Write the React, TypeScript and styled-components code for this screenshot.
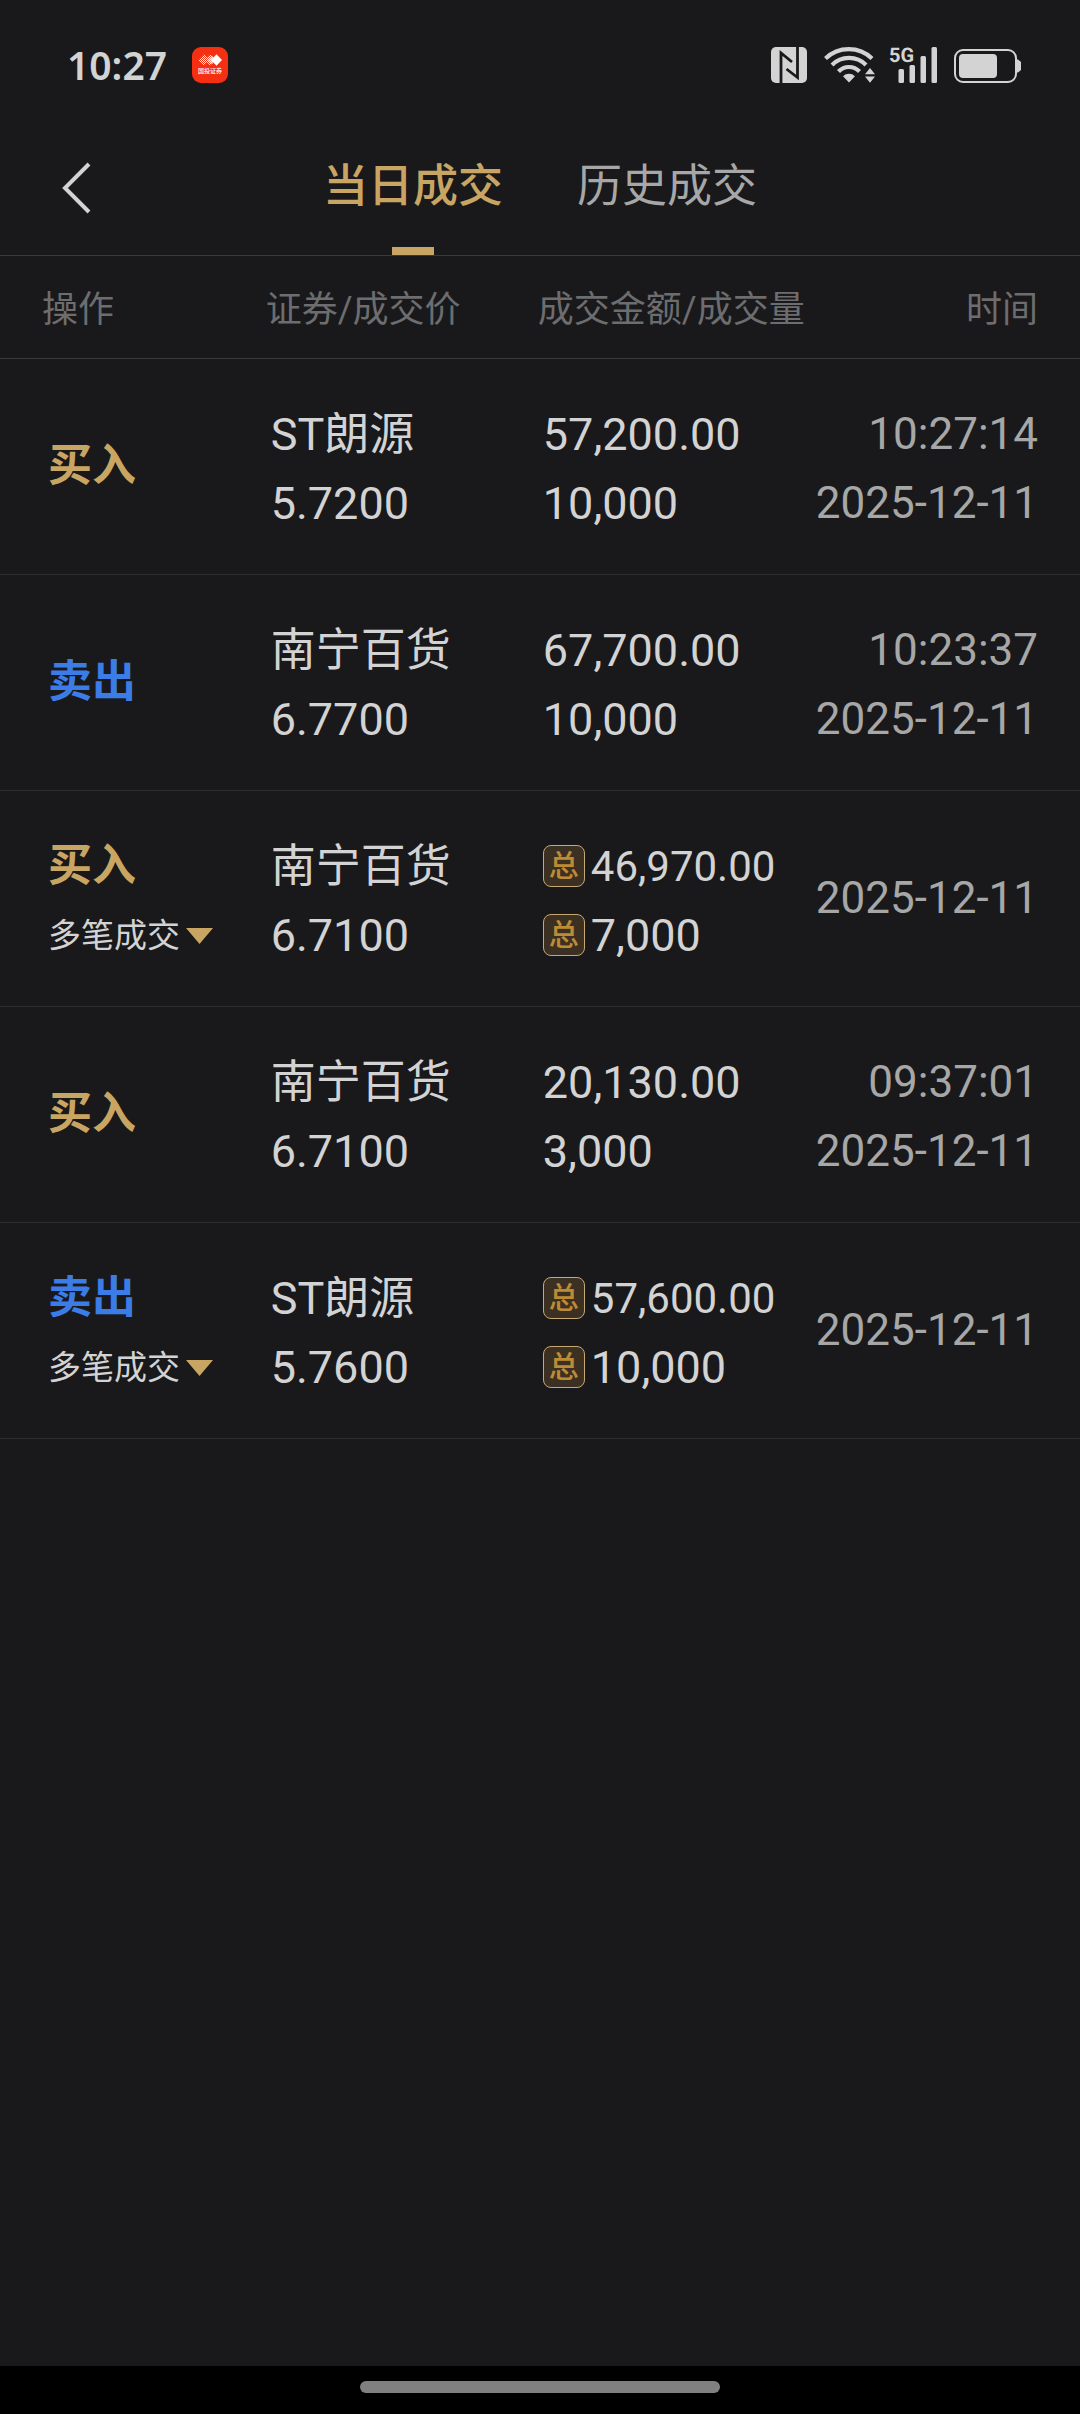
import React from "react";
import styled, { createGlobalStyle } from "styled-components";

const color = {
  page: "#19191b",
  text: "#d3d3d3",
  dim: "#a6a7a6",
  faint: "#6d6d6f",
  gold: "#c9a564",
  blue: "#3b7ce6",
  line: "#2d2d2f",
  headLine: "#39393b",
};

const sans = `Roboto, "Noto Sans CJK SC", sans-serif`;

const GlobalStyle = createGlobalStyle`
  *, *::before, *::after { box-sizing: border-box; }
  body {
    margin: 0;
    background: ${color.page};
    color: ${color.text};
    font-family: ${sans};
  }
  button { margin: 0; padding: 0; border: 0; background: none; color: inherit; font: inherit; cursor: pointer; }
`;

const Screen = styled.div`
  display: flex;
  flex-direction: column;
  min-height: 100vh;
`;

const StatusBar = styled.header`
  display: flex;
  align-items: flex-start;
  justify-content: space-between;
  height: 96px;
  padding: 32px 59px 0 67px;
`;

const StatusGroup = styled.div`
  display: flex;
  align-items: center;
  gap: 25px;
  height: 65px;
`;

const Clock = styled.time`
  font: 600 39px/64px "Noto Sans", "Open Sans", sans-serif;
`;

const TopNav = styled.nav`
  display: grid;
  grid-template-columns: 1fr auto 1fr;
  height: 160px;
  border-bottom: 1px solid ${color.headLine};
`;

const BackButton = styled.button`
  display: flex;
  align-items: center;
  justify-self: start;
  padding: 24px 48px 0 61px;
`;

const Tabs = styled.div`
  display: flex;
  gap: 74px;
`;

const Tab = styled.button<{ $active?: boolean }>`
  display: flex;
  flex-direction: column;
  align-items: center;
  justify-content: flex-end;
  gap: 28px;
  color: ${(p) => (p.$active ? color.gold : color.dim)};
  font-size: 45px;
  font-weight: ${(p) => (p.$active ? 500 : 400)};
  line-height: 64px;

  &::after {
    content: "";
    width: 42px;
    height: 8px;
    background: ${(p) => (p.$active ? color.gold : "transparent")};
  }
`;

const Main = styled.main`
  flex: 1;
`;

const Table = styled.table`
  width: 100%;
  table-layout: fixed;
  border-collapse: separate;
  border-spacing: 0;
`;

const Col = styled.col<{ $width?: string }>`
  width: ${(p) => p.$width ?? "auto"};
`;

const HeadCell = styled.th`
  height: 103px;
  padding: 6px 0 0;
  border-bottom: 1px solid ${color.headLine};
  color: ${color.faint};
  font-size: 36px;
  font-weight: 400;
  line-height: 48px;
  text-align: left;
  white-space: nowrap;

  &:first-child { padding-left: 42px; }
  &:last-child { padding-right: 42px; text-align: right; }
`;

const Cell = styled.td<{ $single?: boolean }>`
  padding: ${(p) => (p.$single ? 36 : 41)}px 0 36px 5px;
  border-bottom: 1px solid ${color.line};
  font-size: 45px;
  line-height: 69px;
  vertical-align: middle;
  white-space: nowrap;

  &:first-child { padding-left: 48px; }
  &:last-child {
    padding-right: 42px;
    padding-left: 0;
    color: ${color.dim};
    font-size: 44px;
    text-align: right;
  }
`;

const Line = styled.div<{ $small?: boolean }>`
  display: flex;
  align-items: center;
  gap: 6px;
  font-size: ${(p) => (p.$small ? 42 : 45)}px;
`;

const Side = styled.div<{ $sell: boolean }>`
  color: ${(p) => (p.$sell ? color.blue : color.gold)};
  font-size: 44px;
  font-weight: 700;
`;

const FillsButton = styled.button`
  display: flex;
  align-items: center;
  gap: 6px;
  font-size: 33px;
  line-height: 69px;
`;

const TotalBadge = styled.span`
  display: flex;
  align-items: center;
  justify-content: center;
  width: 42px;
  height: 42px;
  margin-bottom: 2px;
  border: 1px solid #c6a873;
  border-radius: 8px;
  background: #3c3023;
  color: #bd8b35;
  font-size: 30px;
  font-weight: 500;
  line-height: 40px;
`;

const GestureBar = styled.footer`
  display: flex;
  justify-content: center;
  height: 48px;
  padding-top: 15px;
  background: #000;
`;

const GesturePill = styled.div`
  width: 33.333%;
  height: 12px;
  border-radius: 6px;
  background: #808080;
`;

const AppIcon = () => (
  <svg width="36" height="36" viewBox="0 0 36 36" role="img" aria-label="国投证券">
    <defs>
      <pattern id="dots" width="2" height="2" patternUnits="userSpaceOnUse">
        <rect width="1" height="1" fill="#fff" />
        <rect x="1" y="1" width="1" height="1" fill="#fff" />
      </pattern>
    </defs>
    <rect width="36" height="36" rx="9" fill="#f52f12" />
    <path d="M6.500 13 12 7.500 17.500 13 12 18.500Z" fill="url(#dots)" />
    <path d="M12.500 13 18 7.500 23.500 13 18 18.500Z" fill="url(#dots)" />
    <path d="M15.500 13 20 8.500 24 13 20 17.500Z" fill="#fff" fillOpacity=".55" />
    <path d="M19 13 24.500 7.300 30 13 24.500 18.700Z" fill="#fff" />
    <text x="18" y="26" textAnchor="middle" fontSize="6" fontWeight="500" fill="#fff" fontFamily="Noto Sans CJK SC, sans-serif">
      国投证券
    </text>
  </svg>
);

const StatusIcons = () => (
  <svg width="250" height="48" viewBox="771 40 250 48" fill={color.text} role="img" aria-label="NFC, Wi-Fi, 5G, 电池">
    {/* NFC */}
    <rect x="771" y="46" width="36" height="36" rx="5" />
    <path d="M781 82V52l11 9M797.500 46V76.500l-11-8.500" fill="none" stroke={color.page} strokeWidth="2.800" />
    {/* Wi-Fi */}
    <g fill="none" stroke={color.text} strokeWidth="4.200">
      <path d="M825.500 57.500a33.500 33.500 0 0 1 46.500 0" />
      <path d="M832 64a24 24 0 0 1 34 0" />
      <path d="M838.500 70.500a14.500 14.500 0 0 1 21 0" />
    </g>
    <path d="M849 81.500l-6-6.300a8.500 8.500 0 0 1 12 0z" />
    <path d="M870 67l5 6.300h-10zM870 81.700l5-6.300h-10z" />
    {/* 5G */}
    <text x="889" y="61" fontSize="20" fontWeight="700" fontFamily="Roboto, sans-serif" textRendering="geometricPrecision">
      5G
    </text>
    <rect x="898.500" y="68" width="5.500" height="14" rx="1.500" />
    <rect x="909.500" y="64" width="5.500" height="18" rx="1.500" />
    <rect x="920.500" y="55" width="5.500" height="27" rx="1.500" />
    <rect x="931.500" y="46" width="5.500" height="36" rx="1.500" />
    {/* battery */}
    <rect x="955" y="49" width="61" height="32" rx="8" fill="none" stroke={color.text} strokeWidth="2" />
    <rect x="959" y="53" width="38" height="24" rx="4" />
    <path d="M1017 58.500h1l3 2.500v8l-3 2.500h-1z" />
  </svg>
);

const BackIcon = () => (
  <svg width="30" height="52" viewBox="0 0 30 52" fill="none" stroke={color.text} strokeWidth="4" aria-hidden="true">
    <path d="M28 2 4 26l24 24" />
  </svg>
);

const Triangle = () => (
  <svg width="27" height="16" viewBox="0 0 27 16" aria-hidden="true">
    <path d="M0 0h27L13.500 16z" fill={color.gold} />
  </svg>
);

type Trade = {
  side: "买入" | "卖出";
  name: string;
  price: string;
  amount: string;
  volume: string;
  time?: string;
  date: string;
};

const trades: Trade[] = [
  { side: "买入", name: "ST朗源", price: "5.7200", amount: "57,200.00", volume: "10,000", time: "10:27:14", date: "2025-12-11" },
  { side: "卖出", name: "南宁百货", price: "6.7700", amount: "67,700.00", volume: "10,000", time: "10:23:37", date: "2025-12-11" },
  { side: "买入", name: "南宁百货", price: "6.7100", amount: "46,970.00", volume: "7,000", date: "2025-12-11" },
  { side: "买入", name: "南宁百货", price: "6.7100", amount: "20,130.00", volume: "3,000", time: "09:37:01", date: "2025-12-11" },
  { side: "卖出", name: "ST朗源", price: "5.7600", amount: "57,600.00", volume: "10,000", date: "2025-12-11" },
];

const TradeRow = ({ trade }: { trade: Trade }) => {
  // A trade without its own time groups several fills and shows totals.
  const grouped = !trade.time;
  return (
    <tr>
      <Cell $single={!grouped}>
        <Side $sell={trade.side === "卖出"}>{trade.side}</Side>
        {grouped && (
          <FillsButton type="button">
            多笔成交
            <Triangle />
          </FillsButton>
        )}
      </Cell>
      <Cell>
        <Line>{trade.name}</Line>
        <Line>{trade.price}</Line>
      </Cell>
      <Cell>
        <Line $small={grouped}>
          {grouped && <TotalBadge>总</TotalBadge>}
          {trade.amount}
        </Line>
        <Line>
          {grouped && <TotalBadge>总</TotalBadge>}
          {trade.volume}
        </Line>
      </Cell>
      <Cell $single={grouped}>
        {trade.time && <div>{trade.time}</div>}
        <div>{trade.date}</div>
      </Cell>
    </tr>
  );
};

export default function App() {
  return (
    <Screen>
      <GlobalStyle />
      <StatusBar>
        <StatusGroup>
          <Clock>10:27</Clock>
          <AppIcon />
        </StatusGroup>
        <StatusGroup>
          <StatusIcons />
        </StatusGroup>
      </StatusBar>
      <TopNav>
        <BackButton type="button" aria-label="返回">
          <BackIcon />
        </BackButton>
        <Tabs>
          <Tab type="button" $active>当日成交</Tab>
          <Tab type="button">历史成交</Tab>
        </Tabs>
      </TopNav>
      <Main>
        <Table>
          <colgroup>
            <Col $width="24.6%" />
            <Col $width="25.2%" />
            <Col $width="25.2%" />
            <Col />
          </colgroup>
          <thead>
            <tr>
              <HeadCell scope="col">操作</HeadCell>
              <HeadCell scope="col">证券/成交价</HeadCell>
              <HeadCell scope="col">成交金额/成交量</HeadCell>
              <HeadCell scope="col">时间</HeadCell>
            </tr>
          </thead>
          <tbody>
            {trades.map((trade, i) => (
              <TradeRow key={i} trade={trade} />
            ))}
          </tbody>
        </Table>
      </Main>
      <GestureBar>
        <GesturePill />
      </GestureBar>
    </Screen>
  );
}
